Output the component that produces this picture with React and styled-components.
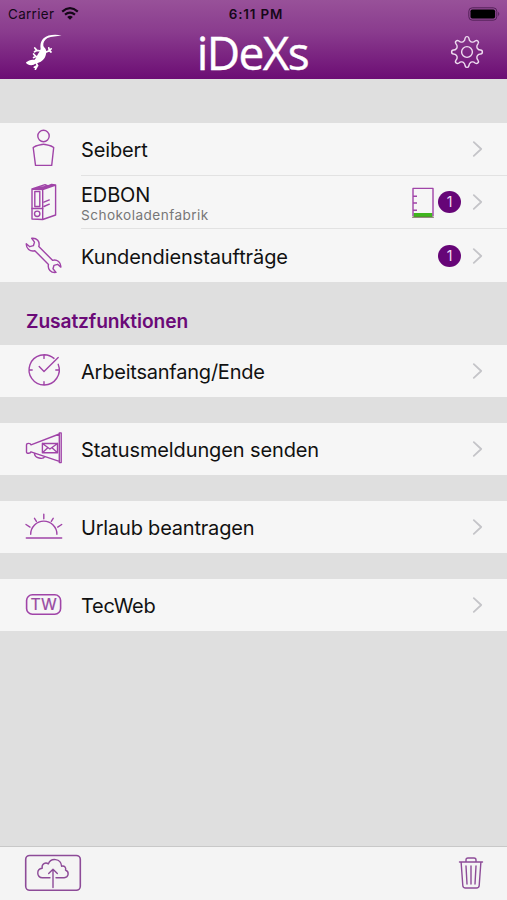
import React from 'react'
import styled, {createGlobalStyle} from 'styled-components'

const GlobalStyle = createGlobalStyle`
    body {
        margin: 0;
        background-color: #dfdfdf;
        font-family: Inter, "Liberation Sans", sans-serif;
    }
    * {
        box-sizing: border-box;
    }
`

const Container = styled.div`
    display: flex;
    flex-direction: column;
    width: 507px;
    height: 900px;
    overflow: hidden;
    background-color: #dfdfdf;
`

const Header = styled.header`
    height: 79px;
    background: linear-gradient(#985199, #8a3c8e 40%, #6c0d74);
`

const StatusBar = styled.div`
    display: grid;
    grid-template-columns: 1fr auto 1fr;
    align-items: center;
    height: 27px;
    padding: 0 7px 0 8px;
    color: #150718;
    font-size: 13.4px;
`

const Carrier = styled.div`
    display: flex;
    align-items: center;
    gap: 7px;
    letter-spacing: 0.35px;
`

const Time = styled.span`
    font-weight: 600;
    letter-spacing: 0.85px;
    margin-right: -4px;
`

const Battery = styled.svg`
    justify-self: end;
`

const NavBar = styled.div`
    display: grid;
    grid-template-columns: 1fr auto 1fr;
    align-items: center;
    height: 52px;
    padding: 0 23px;
`

const Title = styled.h1`
    margin: 0 2px 0 0;
    color: #fff;
    font-family: "Open Sans", "Noto Sans", sans-serif;
    font-size: 46px;
    font-weight: 400;
    line-height: 50px;
    height: 52px;
    letter-spacing: -1.6px;
    -webkit-text-stroke: 0.4px #fff;
`

const Main = styled.main`
    flex: 1;
    padding-top: 44px;
`

const Group = styled.section`
    margin-bottom: ${props => props.$gap || "26px"};
    background-color: #f6f6f6;
`

const SectionTitle = styled.h2`
    height: 63px;
    margin: 0;
    padding: 21px 26px 0;
    color: #6b0a78;
    font-size: 19.2px;
    font-weight: 600;
    line-height: 36px;
    letter-spacing: -0.1px;
`

const RowBox = styled.div`
    display: flex;
    height: ${props => props.$height || "52px"};
    padding-left: 23px;
`

const IconCell = styled.div`
    display: flex;
    align-items: center;
    width: 58px;
`

const Content = styled.div`
    display: flex;
    flex: 1;
    align-items: center;
    padding-right: 24px;
    border-bottom: ${props => props.$line ? "1px solid #e2e2e2" : "none"};
`

const Texts = styled.div`
    flex: 1;
    padding-top: ${props => props.$sub ? "4px" : "2px"};
`

const Label = styled.div`
    color: #111;
    font-size: 20px;
    line-height: ${props => props.$sub ? "23px" : "26px"};
    letter-spacing: ${props => props.$spacing || "-0.15px"};
    white-space: nowrap;
`

const SubLabel = styled.div`
    color: #777;
    font-size: 13.6px;
    line-height: 17px;
    letter-spacing: 0.45px;
`

const Badge = styled.span`
    width: 23px;
    height: 22px;
    margin: 0 12px 0 4px;
    border-radius: 50%;
    background-color: #660577;
    color: #f0dcf2;
    font-size: 14px;
    line-height: 22px;
    text-align: center;
`

const Footer = styled.footer`
    display: flex;
    justify-content: space-between;
    align-items: center;
    height: 54px;
    padding: 0 23px 1px 24px;
    border-top: 1px solid #c8c8c8;
    background-color: #f4f4f4;
`

const Line = styled.svg`
    flex: none;
    justify-self: end;
    overflow: visible;
    fill: none;
    stroke: ${props => props.$color || "#a044a8"};
    stroke-width: 1.4;
    stroke-linecap: round;
    stroke-linejoin: round;
`

const IconText = styled.text`
    fill: #984aa2;
    stroke: #984aa2;
    stroke-width: 0.2;
    font-size: 16px;
    text-anchor: middle;
`

const Icon = ({children}) => (
    <Line width="40" height="40" viewBox="0 0 40 40">{children}</Line>
)

const PersonIcon = () => (
    <Icon>
        <circle cx="20.5" cy="6" r="5.7" />
        <path d="M10.2 17.5Q12 15.9 17.5 14.7Q20.5 13.9 23.5 14.7Q29 15.9 30.7 17.5L28.7 35.4H12.5Z" />
    </Icon>
)

const BinderIcon = () => (
    <Icon>
        <path d="M9 6L19.7 6.5V36.5L9 36ZM19.7 6.5L32.6 2V32L19.7 36.5M9 6L22 1.7L25 3L28.5 1.5L32.6 2M13 6L25 2.7M17 6.3L28 2.3" />
        <path d="M11.8 8.5H16.8V23.5H11.8ZM9 25.5H19.7M20.9 19.2L26.3 16.9M20.9 23.5L26.3 21.2" />
        <circle cx="14.2" cy="30.8" r="2.7" />
    </Icon>
)

const WrenchIcon = () => (
    <Icon>
        <path d="M8.7 2.3C13.8 1.7 17.2 5.5 15.8 10.5L29.5 24.3C34.2 23 38.2 26.5 37.8 31.1L34.6 28.3L31 29.3L30 32.8L33 36.4C28 37.2 24.3 33 25.5 28.4L11.8 14.7C7 16 3 12.3 3.3 7.7L6.8 10.7L10.4 9.7L11.5 6.1Z" />
    </Icon>
)

const ClockIcon = () => (
    <Icon>
        <path d="M31 7.4A15.1 15.1 0 1 0 35.2 13.3M21 4V7.4M21 34V30.7M6 19H9.2M36 19H32.8M16.2 15.6L21 20.4L35.2 6.4" />
    </Icon>
)

const MegaphoneIcon = () => (
    <Icon>
        <path d="M8 15.8L36.3 5V32.3L8 22.8C7.5 24.5 3.5 25 3.5 23V16C3.5 13.8 7.5 14 8 15.8ZM36.3 5V3.9H38.2V33.6H36.3V32.3M11.4 24.2C11.6 29.5 20.4 30.7 21.7 27.5" />
        <path d="M19.4 14.5H34.5V23.7H19.4ZM19.4 14.5L26.9 20L34.5 14.5M19.4 23.7L24.8 18.7M34.5 23.7L29 18.7" />
    </Icon>
)

const SunriseIcon = () => (
    <Icon>
        <path d="M3.3 31H38.7M7.7 27.2A13.1 13.1 0 0 1 33.9 27.2M20.8 7.3V11.8M11.5 11.3L13.4 14.3M30.2 11.3L28.3 14.3M3 17.5L7 20.1M38.7 17.5L34.7 20.1" />
    </Icon>
)

const TecWebIcon = () => (
    <Icon>
        <rect x="3.6" y="9.8" width="34" height="19.4" rx="5.8" strokeWidth="1.6" />
        <IconText x="20.6" y="25.2">TW</IconText>
    </Icon>
)

const GaugeIcon = () => (
    <Line width="22" height="32" viewBox="0 0 22 32">
        <path d="M1.5 27H20.5V31H1.5Z" fill="#3fb51d" stroke="none" />
        <path d="M1 30V2.4H21V30M1 10.2H5M1 17H5M1 24.2H5" strokeLinecap="butt" />
        <path d="M0.5 31.2H21.5" stroke="#6b5a4c" strokeWidth="1" />
    </Line>
)

const Chevron = () => (
    <Line $color="#c4c4c8" width="10" height="16" viewBox="0 0 10 16">
        <path d="M0.8 1.2L8.2 8L0.8 14.8" strokeWidth="1.8" />
    </Line>
)

const WifiIcon = () => (
    <svg width="18" height="14" viewBox="0 0 18 14" fill="none" stroke="#150718" strokeWidth="2.2">
        <path d="M1.2 4.6Q9 -2.2 16.8 4.6M4 7.6Q9 3.5 14 7.6" />
        <path d="M6.2 9.9Q9 7.7 11.8 9.9L9 12.7Z" fill="#150718" stroke="none" />
    </svg>
)

const GeckoIcon = () => (
    <svg width="40" height="40" viewBox="0 0 40 40" fill="#fff">
        <path d="M38.6 2.4C32 1 24.5 1.6 20.6 5.3C17.4 8.4 17.2 12.4 17.6 15.6C17.4 18.6 15.5 20 14.3 22.3C13.5 24 12.8 25.8 11.2 26.9C8.6 26.2 5 27.8 3 29.3C3.1 30.9 5.5 32.3 8.2 32.3C10.3 32.3 11.4 31.2 13 30.5C16 30.1 19.8 28.1 21.6 25.1C23 22.6 23.6 19.6 23 17.1C22.6 15.3 20.6 14.6 20.3 12.6C20 9.5 21.7 6.6 24.5 5C28.5 2.9 33.5 3.4 38.6 2.4Z" />
        <path d="M18 18L13.8 17.4L11.8 15M13.8 17.4L11.5 18.8M22 19.4L26.4 17.8L25.8 14.8M26.4 17.8L28.2 15.8M26.4 17.8L28 19M16 23.6L12.7 23.4L10.6 21M12.7 23.4L10.6 24.6M13 29.6L14.5 32.6L11.3 34.2M14.5 32.6L12.4 36.2" fill="none" stroke="#fff" strokeWidth="1.7" strokeLinecap="round" />
    </svg>
)

// eight teeth, each 45 degrees apart
const gearPath = () => {
    const point = (r, deg) => {
        const a = deg * Math.PI / 180
        return (17 + r * Math.sin(a)).toFixed(2) + " " + (17 - r * Math.cos(a)).toFixed(2)
    }
    let d = "M" + point(11.2, -17)
    for (let i = 0; i < 8; i++) {
        const a = i * 45
        d += "Q" + point(11.8, a - 10) + " " + point(13.6, a - 8.5)
        d += "Q" + point(15.6, a - 6.5) + " " + point(15.4, a)
        d += "Q" + point(15.6, a + 6.5) + " " + point(13.6, a + 8.5)
        d += "Q" + point(11.8, a + 10) + " " + point(11.2, a + 17)
        d += "Q" + point(10.6, a + 22.5) + " " + point(11.2, a + 28)
    }
    return d + "Z"
}

const GearIcon = () => (
    <Line $color="#eedcf0" width="34" height="34" viewBox="0 1 34 34">
        <path d={gearPath()} />
        <circle cx="17" cy="17" r="5.4" />
    </Line>
)

const UploadIcon = () => (
    <Line $color="#8d4b98" width="58" height="38" viewBox="0 0 58 38">
        <rect x="1.7" y="1.5" width="54.6" height="34.8" rx="4" strokeWidth="1.6" />
        <path d="M26 23.8H18.5C12.3 23.4 12.2 14.9 18.2 14.3C17.3 9.8 21.7 7.8 24.3 9.9C26.7 3.5 36.9 4 37.6 12.2C40.7 11.4 42.3 13.8 41.5 16C45.6 17.7 44.8 23.4 40.2 23.8H32M29 33.5V15.4M24.7 19.4L29 15.2L33.3 19.4" />
    </Line>
)

const TrashIcon = () => (
    <Line $color="#8d4b98" width="26" height="34" viewBox="0 0 26 34">
        <path d="M1.5 6H24.5M8 6V4Q8 2 10 2H16Q18 2 18 4V6M3.1 6L4.8 29.5Q5 32 7.5 32H18.5Q21 32 21.2 29.5L22.9 6M8 10L9 28M13 10V28M18 10L17 28" />
    </Line>
)

const Row = ({icon, label, sub, spacing, gauge, count, line, height}) => (
    <RowBox $height={height}>
        <IconCell>{icon}</IconCell>
        <Content $line={line}>
            <Texts $sub={sub}>
                <Label $sub={sub} $spacing={spacing}>{label}</Label>
                {sub && <SubLabel>{sub}</SubLabel>}
            </Texts>
            {gauge && <GaugeIcon />}
            {count && <Badge>{count}</Badge>}
            <Chevron />
        </Content>
    </RowBox>
)

const App = () => {
    return (
        <Container>
            <GlobalStyle />
            <Header>
                <StatusBar>
                    <Carrier>Carrier <WifiIcon /></Carrier>
                    <Time>6:11 PM</Time>
                    <Battery width="32" height="14" viewBox="0 0 32 14">
                        <rect x="0.8" y="0.8" width="28" height="12.4" rx="3.5" fill="none" stroke="#542259" />
                        <rect x="2.5" y="2.5" width="24.6" height="9" rx="1.8" fill="#000" />
                        <path d="M30.2 4.8Q32.4 7 30.2 9.2Z" fill="#542259" />
                    </Battery>
                </StatusBar>
                <NavBar>
                    <GeckoIcon />
                    <Title>iDeXs</Title>
                    <GearIcon />
                </NavBar>
            </Header>
            <Main>
                <Group $gap="0">
                    <Row icon={<PersonIcon />} label="Seibert" line height="53px" />
                    <Row icon={<BinderIcon />} label="EDBON" sub="Schokoladenfabrik" gauge count="1" line height="53px" />
                    <Row icon={<WrenchIcon />} label="Kundendienstaufträge" spacing="-0.1px" count="1" height="53px" />
                </Group>
                <SectionTitle>Zusatzfunktionen</SectionTitle>
                <Group>
                    <Row icon={<ClockIcon />} label="Arbeitsanfang/Ende" spacing="-0.22px" />
                </Group>
                <Group>
                    <Row icon={<MegaphoneIcon />} label="Statusmeldungen senden" spacing="-0.12px" />
                </Group>
                <Group>
                    <Row icon={<SunriseIcon />} label="Urlaub beantragen" spacing="-0.2px" />
                </Group>
                <Group>
                    <Row icon={<TecWebIcon />} label="TecWeb" spacing="-0.25px" />
                </Group>
            </Main>
            <Footer>
                <UploadIcon />
                <TrashIcon />
            </Footer>
        </Container>
    )
}

export default App
